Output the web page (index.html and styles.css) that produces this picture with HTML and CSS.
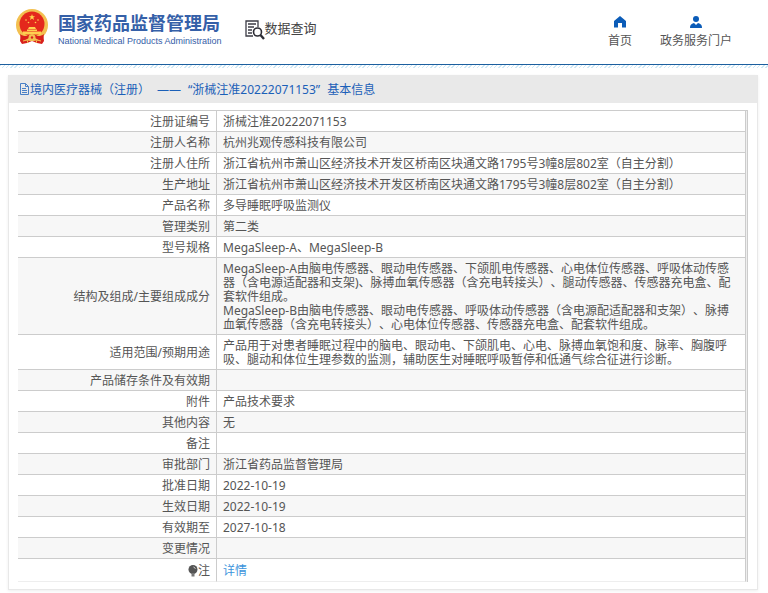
FILE: index.html
```html
<!DOCTYPE html>
<html lang="zh-CN">
<head>
<meta charset="utf-8">
<title>国家药品监督管理局 数据查询</title>
<link rel="stylesheet" href="styles.css">
</head>
<body>
<header class="header">
  <a class="brand" href="#">
    <svg class="emblem" viewBox="0 0 32 35" aria-hidden="true">
      <path d="M5 24h22l1 8-2 3-5-1-5-2-5 2-5 1-2-3z" fill="#d8201c"/>
      <circle cx="16" cy="16" r="16" fill="#f3c050"/>
      <circle cx="16" cy="15" r="12.500" fill="#e4281c"/>
      <path d="M16 5l.8 2.200h2.300l-1.800 1.400.7 2.300-2-1.400-2 1.400.7-2.300-1.800-1.400h2.300z" fill="#ffd84d"/>
      <g fill="#ffd050"><circle cx="10" cy="11" r=".8"/><circle cx="12.500" cy="13.500" r=".8"/><circle cx="19.500" cy="13.500" r=".8"/><circle cx="22" cy="11" r=".8"/>
      <path d="M13 18h6l1 2h-8zM11 20.500h10v1.500H11zM7 22.500h18v3H7z"/></g>
      <path d="M4 25c4 3 7 2 9 1l3-1 3 1c2 1 5 2 9-1l-1 5c-4 2-6 0-8-1l-3 1-3-1c-2 1-4 3-8 1z" fill="#d8201c"/>
      <circle cx="16" cy="28.500" r="3.500" fill="#f3c050"/><circle cx="16" cy="28.500" r="1.200" fill="#d8201c"/>
      <path d="M7 32l4-1 1 3M25 32l-4-1-1 3" fill="none" stroke="#f3c050"/>
    </svg>
    <span class="brand-text">
      <span class="brand-cn">国家药品监督管理局</span>
      <span class="brand-en">National Medical Products Administration</span>
    </span>
  </a>
  <a class="search-title" href="#">
    <svg class="search-icon" viewBox="0 0 20 20" aria-hidden="true">
      <path d="M13 7V1H1v15h7M3 4h8M3 7h6M3 10h4M3 13h4" fill="none" stroke="#3c3c46" stroke-width="1.300"/>
      <circle cx="12.500" cy="12" r="4" fill="#fff" stroke="#2c2c34" stroke-width="1.600"/>
      <path d="M15.500 15l3.500 4" stroke="#2c2c34" stroke-width="2.400"/>
    </svg>
    <span>数据查询</span>
  </a>
  <nav class="nav">
    <a href="#"><svg viewBox="0 0 12 12" aria-hidden="true"><path d="M6 0L0 5v6.500h4V7h4v4.500h4V5z"/></svg>首页</a>
    <a href="#"><svg viewBox="0 0 12 12" aria-hidden="true"><circle cx="6" cy="3" r="3"/><path d="M0 12c0-3 1-4 4-5l2 2 2-2c3 1 4 2 4 5z"/></svg>政务服务门户</a>
  </nav>
</header>
<main class="panel">
  <h1 class="panel-title">
    <span class="kind"><svg viewBox="0 0 11 12" aria-hidden="true"><path d="M1.500.500h5l3 3v8h-8zM6.500.500v3h3M3 5.500h4M3 7.500h5M3 9.500h5" fill="none" stroke="#4a80c6"/></svg>境内医疗器械（注册）</span>
    <span>——</span>
    <span>“浙械注准20222071153”</span>
    <span>基本信息</span>
  </h1>
  <div class="panel-body">
    <table class="info">
      <tbody>
        <tr><th scope="row">注册证编号</th><td>浙械注准20222071153</td></tr>
        <tr><th scope="row">注册人名称</th><td>杭州兆观传感科技有限公司</td></tr>
        <tr><th scope="row">注册人住所</th><td>浙江省杭州市萧山区经济技术开发区桥南区块通文路1795号3幢8层802室（自主分割）</td></tr>
        <tr><th scope="row">生产地址</th><td>浙江省杭州市萧山区经济技术开发区桥南区块通文路1795号3幢8层802室（自主分割）</td></tr>
        <tr><th scope="row">产品名称</th><td>多导睡眠呼吸监测仪</td></tr>
        <tr><th scope="row">管理类别</th><td>第二类</td></tr>
        <tr><th scope="row">型号规格</th><td>MegaSleep-A、MegaSleep-B</td></tr>
        <tr><th scope="row">结构及组成/主要组成成分</th><td>MegaSleep-A由脑电传感器、眼动电传感器、下颌肌电传感器、心电体位传感器、呼吸体动传感器（含电源适配器和支架)、脉搏血氧传感器（含充电转接头）、腿动传感器、传感器充电盒、配套软件组成。<br>MegaSleep-B由脑电传感器、眼动电传感器、呼吸体动传感器（含电源配适配器和支架）、脉搏血氧传感器（含充电转接头）、心电体位传感器、传感器充电盒、配套软件组成。</td></tr>
        <tr><th scope="row">适用范围/预期用途</th><td>产品用于对患者睡眠过程中的脑电、眼动电、下颌肌电、心电、脉搏血氧饱和度、脉率、胸腹呼吸、腿动和体位生理参数的监测，辅助医生对睡眠呼吸暂停和低通气综合征进行诊断。</td></tr>
        <tr><th scope="row">产品储存条件及有效期</th><td></td></tr>
        <tr><th scope="row">附件</th><td>产品技术要求</td></tr>
        <tr><th scope="row">其他内容</th><td>无</td></tr>
        <tr><th scope="row">备注</th><td></td></tr>
        <tr><th scope="row">审批部门</th><td>浙江省药品监督管理局</td></tr>
        <tr><th scope="row">批准日期</th><td>2022-10-19</td></tr>
        <tr><th scope="row">生效日期</th><td>2022-10-19</td></tr>
        <tr><th scope="row">有效期至</th><td>2027-10-18</td></tr>
        <tr><th scope="row">变更情况</th><td></td></tr>
        <tr class="note"><th scope="row"><svg viewBox="0 0 10 12" aria-hidden="true"><circle cx="5" cy="4.500" r="4.500" fill="#555"/><path d="M3.500 8h3v3.500h-3z" fill="#777"/><path d="M5.500 2l2 1.500" stroke="#ddd"/></svg>注</th><td><a href="#">详情</a></td></tr>
      </tbody>
    </table>
  </div>
</main>
</body>
</html>
```
FILE: styles.css
```css
* { box-sizing: border-box; }
body {
  margin: 0;
  background: #fff;
  color: #555;
  font: 12px/14px "Noto Sans", "Noto Sans CJK SC", sans-serif;
  text-spacing-trim: space-all;
}
a { color: inherit; text-decoration: none; }
svg { display: block; flex: none; }

.header {
  display: flex;
  align-items: flex-start;
  height: 69px;
  padding: 0 36px 0 16px;
  background:
    linear-gradient(#1c5f9f, #1c5f9f) 0 64px / 100% 1px no-repeat,
    repeating-linear-gradient(135deg, #cfe8f5 0 1px, #fff 1px 3px) 0 65px / 100% 3px no-repeat;
}
.brand { display: flex; gap: 10px; padding-top: 9px; color: #3560a8; }
.emblem { width: 32px; height: 35px; }
.brand-text { display: flex; flex-direction: column; padding-top: 3px; }
.brand-cn { font-size: 18px; line-height: 22px; font-weight: 700; }
.brand-en { font: 9px/14px "Liberation Sans", sans-serif; white-space: nowrap; }
.search-title { display: flex; margin-left: 23px; padding-top: 20px; color: #444; font-size: 13px; line-height: 16px; }
.search-icon { width: 20px; height: 20px; }
.nav { display: flex; gap: 28px; margin-left: auto; padding-top: 16px; }
.nav a { display: flex; flex-direction: column; align-items: center; gap: 6px; }
.nav svg { width: 12px; height: 12px; fill: #0b5cb8; }

.panel {
  margin: 6px 10px 4px 8px;
  border: 1px solid #e8e8e8;
  border-top: 0;
  box-shadow: 0 1px 3px #eee;
}
.panel-title {
  display: flex;
  gap: 7px;
  margin: 0;
  padding: 8px 10px 6px;
  background: #e9e9e9;
  color: #1b60b8;
  font-size: 12px;
  font-weight: 400;
}
.kind { display: flex; }
.panel-title svg { width: 11px; height: 12px; }
.panel-body { padding: 7px 9px; }
.info {
  width: 100%;
  border-spacing: 0;
  border-top: 1px solid #ccc;
  border-right: 1px solid #ccc;
  padding-right: 1px;
  background: #eee;
}
.info tr { background: #fff; }
.info th, .info td {
  padding: 4px 6px 2px;
  border-right: 1px solid #ccc;
  border-bottom: 1px solid #ccc;
}
.info th { width: 199px; font-weight: 400; text-align: right; }
.info td { height: 21px; text-align: left; }
.info tr:nth-child(even) { background: #f7f7f7; }
.info .note th, .info .note td { padding: 5px 6px 3px; border-bottom-color: #eee; }
.note svg { display: inline-block; width: 10px; height: 12px; vertical-align: -2px; }
.note a { color: #3c94dc; }
```
